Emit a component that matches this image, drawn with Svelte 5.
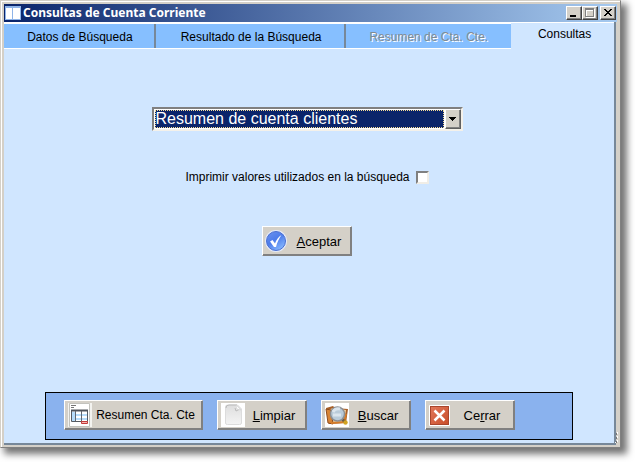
<script lang="ts">
	const tabs = [
		{ id: 'datos', label: 'Datos de Búsqueda', disabled: false },
		{ id: 'resultado', label: 'Resultado de la Búsqueda', disabled: false },
		{ id: 'resumen', label: 'Resumen de Cta. Cte.', disabled: true },
		{ id: 'consultas', label: 'Consultas', disabled: false }
	];

	let activeTab = $state('consultas');
	let report = $state('clientes');
	let printValues = $state(false);
</script>

<main class="window">
	<header class="titlebar">
		<svg class="app-icon" width="16" height="14" viewBox="0 0 16 14" aria-hidden="true">
			<rect width="16" height="14" fill="#8fb4e8" />
			<rect x="1" y="2" width="6" height="11" fill="#fff" />
			<rect x="8" y="2" width="7" height="11" fill="#fff" />
		</svg>
		<h1>Consultas de Cuenta Corriente</h1>
		<div class="window-controls">
			<button class="control" aria-label="Minimizar">
				<svg width="12" height="10" viewBox="0 0 12 10"><path d="M2 7h6v2H2z" fill="#000" /></svg>
			</button>
			<button class="control" aria-label="Maximizar" disabled>
				<svg width="12" height="10" viewBox="0 0 12 10">
					<path d="M2 1h9v9H2zM3 3v6h7V3z" fill="#fff" fill-rule="evenodd" />
					<path d="M1 0h9v9H1zM2 2v6h7V2z" fill="#808080" fill-rule="evenodd" />
				</svg>
			</button>
			<button class="control close" aria-label="Cerrar ventana">
				<svg width="12" height="10" viewBox="0 0 12 10">
					<path d="M2 1h2v1h1v1h2V2h1V1h2v1H9v1H8v1H7v1h1v1h1v1h1v1H8V7H7V6H5v1H4v1H2V7h1V6h1V5h1V4H4V3H3V2H2z" fill="#000" />
				</svg>
			</button>
		</div>
	</header>

	<div class="client">
		<div class="tabs" role="tablist">
			{#each tabs as tab (tab.id)}
				<button
					class="tab"
					class:active={activeTab === tab.id}
					role="tab"
					aria-selected={activeTab === tab.id}
					disabled={tab.disabled}
					onclick={() => (activeTab = tab.id)}
				>
					{tab.label}
				</button>
			{/each}
		</div>

		<section class="panel" role="tabpanel">
			<div class="combo">
				<select bind:value={report} aria-label="Tipo de consulta">
					<option value="clientes">Resumen de cuenta clientes</option>
				</select>
				<span class="arrow" aria-hidden="true">
					<svg width="7" height="4" viewBox="0 0 7 4"><path d="M0 0h7v1H6v1H5v1H4v1H3V3H2V2H1V1H0z" /></svg>
				</span>
			</div>

			<label class="check">
				Imprimir valores utilizados en la búsqueda
				<input type="checkbox" bind:checked={printValues} />
			</label>

			<button class="btn accept">
				<svg width="24" height="24" viewBox="0 0 24 24" aria-hidden="true">
					<defs>
						<linearGradient id="ball" x1="0" y1="0" x2="0.7" y2="1">
							<stop offset="0" stop-color="#6d93ee" />
							<stop offset="0.5" stop-color="#4d7cea" />
							<stop offset="1" stop-color="#86b8ff" />
						</linearGradient>
					</defs>
					<circle cx="12" cy="12" r="11" fill="#e4eafa" />
					<circle cx="12" cy="12" r="9.5" fill="url(#ball)" stroke="#4a6fd0" />
					<path d="M6 12.5l2.5-1.5 2.5 3.5c1.500-4 3.500-6.500 6.500-8.500-2.500 3.500-4.500 7.500-5.500 12h-2z" fill="#fff" />
				</svg>
				<span><u>A</u>ceptar</span>
			</button>
		</section>

		<footer class="toolbar">
			<button class="btn wide">
				<svg width="24" height="24" viewBox="0 0 24 24" aria-hidden="true">
					<rect width="24" height="24" fill="#f3f3f0" />
					<path d="M1.500 .5h20v23h-20z" fill="#fff" stroke="#c2c2bd" />
					<path d="M3 2.500h5M3 4.500h3" stroke="#777" />
					<path d="M3.500 7.500h16v11h-16z" fill="#fff" stroke="#565b62" />
					<path d="M3 6.500h17v2H3z" fill="#50545b" />
					<path d="M4 9h3v9H4zM8 11h5v2H8zM8 15h5v2H8zM14 11h5v2h-5zM14 15h5v2h-5z" fill="#b7dcfa" />
					<path d="M7.500 8v10M13.500 8v10" stroke="#62676f" />
					<path d="M13.500 18.500h6v2h-6z" fill="#f5b3b0" stroke="#c33a38" />
				</svg>
				<span>Resumen Cta. Cte</span>
			</button>
			<button class="btn">
				<svg width="24" height="24" viewBox="0 0 24 24" aria-hidden="true">
					<defs>
						<linearGradient id="sheet" x1="0" y1="0" x2="0" y2="1">
							<stop offset="0" stop-color="#dedede" />
							<stop offset="1" stop-color="#f4f4f4" />
						</linearGradient>
					</defs>
					<rect width="24" height="24" fill="#fff" />
					<path d="M4.500 4q0-2 2-2h10l4 4v14q0 1.500-2 1.500h-12q-2 0-2-1.500z" fill="url(#sheet)" stroke="#dcdcdc" />
					<path d="M5 5q0-3 3-3h8" fill="none" stroke="#bbb" />
					<path d="M14 5l1 3 4-2" fill="none" stroke="#bbb" />
					<path d="M15 2l1 4 4 1z" fill="#fff" stroke="#ccc" stroke-width=".5" />
				</svg>
				<span><u>L</u>impiar</span>
			</button>
			<button class="btn">
				<svg width="24" height="24" viewBox="0 0 24 24" aria-hidden="true">
					<rect width="24" height="24" fill="#fff" />
					<path d="M1 5l7-2 2 2 13 1-2 14-17 1z" fill="#a85f27" />
					<path d="M3 7l5-2 13 2-2 12-14 1z" fill="#f4d3a0" />
					<path d="M1 6l5 1 2 14-5-1z" fill="#d88434" stroke="#8e4d20" />
					<path d="M6 20l13-1 2-8" fill="none" stroke="#d57c29" stroke-width="2" />
					<path d="M17 16l4 4" stroke="#6c5a44" stroke-width="3" />
					<circle cx="12.500" cy="11" r="7" fill="#b9cbd9" stroke="#8b8f94" stroke-width="1.500" />
					<path d="M8 9q2-4 7-3M8 12h8" fill="none" stroke="#dbe5ed" stroke-width="3" />
					<circle cx="20.500" cy="19.500" r="2.200" fill="#d1a321" />
				</svg>
				<span><u>B</u>uscar</span>
			</button>
			<button class="btn">
				<svg width="24" height="24" viewBox="0 0 24 24" aria-hidden="true">
					<defs>
						<linearGradient id="cross" x1="0" y1="0" x2="1" y2="1">
							<stop offset="0" stop-color="#e1785b" />
							<stop offset="1" stop-color="#c94d29" />
						</linearGradient>
					</defs>
					<rect y="2" width="21" height="21" rx="1" fill="#fff" />
					<rect x="1.500" y="3.500" width="18" height="18" fill="url(#cross)" stroke="#a9452b" />
					<path d="M5.500 7.500l10 10M15.500 7.500l-10 10" stroke="#fff" stroke-width="2.500" />
				</svg>
				<span>Ce<u>r</u>rar</span>
			</button>
		</footer>
	</div>

	<svg class="grip" width="4" height="12" viewBox="0 0 4 12" aria-hidden="true">
		<path d="M2 0h1v2H2zM2 4h1v2H2zM2 8h1v2H2zM0 10h1v1H0z" fill="#fff" />
		<path d="M1 1h1v2H1zM1 5h1v2H1zM1 9h1v2H1z" fill="#777" />
	</svg>
</main>

<style>
	:global(body) {
		background: #fff;
	}

	.window {
		position: relative;
		box-sizing: border-box;
		display: flex;
		flex-direction: column;
		min-height: calc(100vh - 14px);
		margin: 0 14px 14px 0;
		padding: 2px;
		border: 1px solid;
		border-color: #d4d0c8 #808080 #808080 #d4d0c8;
		background: #d4d0c8;
		box-shadow: inset 1px 1px #fff, 5px 5px 7px 1px rgba(0, 0, 0, 0.55);
		font-family: 'Liberation Sans', Arial, sans-serif;
		font-size: 12px;
		color: #000;
	}

	button {
		font: inherit;
		color: inherit;
	}

	svg {
		display: block;
		flex: none;
	}

	.titlebar {
		display: flex;
		align-items: center;
		gap: 2px;
		height: 18px;
		margin: 1px 1px 0;
		padding: 0 1px;
		background: linear-gradient(to right, #0a246a, #a6caf0);
	}

	h1 {
		flex: 1;
		margin: 0;
		font-family: 'Noto Sans', 'DejaVu Sans Condensed', sans-serif;
		font-size: 12px;
		font-weight: bold;
		line-height: 18px;
		color: #fff;
	}

	.window-controls {
		display: flex;
	}

	.control {
		box-sizing: border-box;
		width: 16px;
		height: 14px;
		padding: 0 1px;
		border: 1px solid;
		border-color: #fff #404040 #404040 #fff;
		background: #d4d0c8;
		box-shadow: inset -1px -1px #808080;
	}

	.close {
		margin-left: 2px;
	}

	.client {
		flex: 1;
		display: flex;
		flex-direction: column;
		margin-left: 1px;
		margin-right: 2px;
		border-right: 2px solid #778899;
		border-bottom: 2px solid #778899;
		background: #d0e6ff;
	}

	.tabs {
		display: grid;
		grid-template-columns: 152fr 191fr 165fr 103fr;
		height: 27px;
	}

	.tab {
		padding: 1px 4px 0;
		border: 0 solid #fff;
		border-top-width: 2px;
		border-bottom-width: 1px;
		background: #86bfff;
		box-shadow: inset -2px 0 #778899, 1px 0 #fff;
	}

	.tab:nth-child(3) {
		box-shadow: 1px 0 #fff;
	}

	.tab:disabled {
		color: #808b94;
		text-shadow: 1px 1px #fff;
	}

	.tab.active {
		padding: 0 0 4px 4px;
		border-bottom: 0;
		border-top-width: 1px;
		background: #d0e6ff;
		box-shadow: none;
	}

	.panel {
		flex: 1;
		display: flex;
		flex-direction: column;
		align-items: center;
		padding: 58px 4px 40px 0;
	}

	.combo {
		box-sizing: border-box;
		display: flex;
		width: 311px;
		max-width: 100%;
		height: 24px;
		border: 2px solid;
		border-color: #808080 #f4f1ea #f4f1ea #808080;
		background: #fff;
	}

	select {
		appearance: none;
		flex: 1;
		min-width: 0;
		margin: 1px;
		padding: 0;
		border: 1px dotted #f5db95;
		border-radius: 0;
		background: #0a246a;
		color: #fff;
		font: 16px/16px 'Liberation Sans', Arial, sans-serif;
		outline: none;
	}

	.arrow {
		box-sizing: border-box;
		display: flex;
		align-items: center;
		justify-content: center;
		width: 16px;
		border: 1px solid;
		border-color: #fff #606060 #606060 #fff;
		background: #d4d0c8;
		box-shadow: inset -1px -1px #808080;
		pointer-events: none;
	}

	.check {
		display: flex;
		align-items: center;
		gap: 6px;
		margin-top: 38px;
		line-height: 16px;
	}

	.check input {
		appearance: none;
		box-sizing: border-box;
		width: 13px;
		height: 13px;
		margin: 0;
		border: 2px solid;
		border-color: #808080 #f0ede6 #f0ede6 #808080;
		background: #fff;
	}

	.check input:checked {
		background: linear-gradient(#000, #000) center / 5px 5px no-repeat #fff;
	}

	.btn {
		box-sizing: border-box;
		display: flex;
		align-items: center;
		width: 90px;
		height: 30px;
		padding: 0 3px;
		border: 1px solid;
		border-color: #fff #808080 #808080 #fff;
		background: #d4d0c8;
		box-shadow: inset -1px -1px #808080;
		font-size: 13px;
		white-space: nowrap;
	}

	.btn span {
		flex: 1;
		text-align: center;
	}

	.btn.wide {
		width: 139px;
		font-size: 12px;
	}

	.accept {
		margin-top: 41px;
		padding: 0 1px;
	}

	.toolbar {
		display: flex;
		gap: 14px;
		margin: 0 41px 3px 41px;
		padding: 7px 18px 9px;
		border: 1px solid #000;
		background: #8ab2ee;
	}

	.grip {
		position: absolute;
		right: 1px;
		bottom: 3px;
	}
</style>
